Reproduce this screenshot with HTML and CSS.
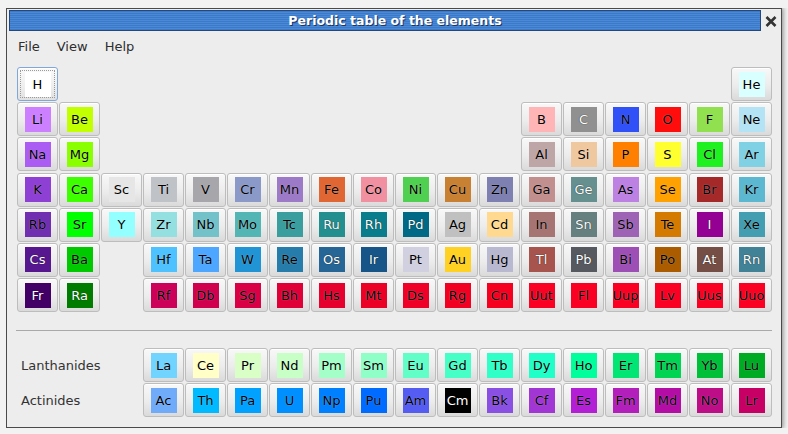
FILE: index.html
```html
<!DOCTYPE html>
<html>
<head>
<meta charset="utf-8">
<title>Periodic table of the elements</title>
<link rel="stylesheet" href="styles.css">
</head>
<body>
<div class="window">
  <div class="titlerow">
    <div class="titlebar">Periodic table of the elements</div>
    <div class="close">
      <svg width="12" height="11" viewBox="0 0 12 11"><path d="M1.5 1 L10.5 10 M10.5 1 L1.5 10" stroke="#333" stroke-width="2.6" fill="none"/></svg>
    </div>
  </div>
  <div class="menubar"><span>File</span><span>View</span><span>Help</span></div>
  <div class="table">
    <div class="el focus"><span class="sw e-H">H</span></div>
    <div class="span16"></div>
    <div class="el"><span class="sw e-He">He</span></div>

    <div class="el"><span class="sw e-Li">Li</span></div>
    <div class="el"><span class="sw e-Be">Be</span></div>
    <div class="span10"></div>
    <div class="el"><span class="sw e-B">B</span></div>
    <div class="el"><span class="sw e-C w">C</span></div>
    <div class="el"><span class="sw e-N">N</span></div>
    <div class="el"><span class="sw e-O">O</span></div>
    <div class="el"><span class="sw e-F">F</span></div>
    <div class="el"><span class="sw e-Ne">Ne</span></div>

    <div class="el"><span class="sw e-Na">Na</span></div>
    <div class="el"><span class="sw e-Mg">Mg</span></div>
    <div class="span10"></div>
    <div class="el"><span class="sw e-Al">Al</span></div>
    <div class="el"><span class="sw e-Si">Si</span></div>
    <div class="el"><span class="sw e-P">P</span></div>
    <div class="el"><span class="sw e-S">S</span></div>
    <div class="el"><span class="sw e-Cl">Cl</span></div>
    <div class="el"><span class="sw e-Ar">Ar</span></div>

    <div class="el"><span class="sw e-K">K</span></div>
    <div class="el"><span class="sw e-Ca">Ca</span></div>
    <div class="el"><span class="sw e-Sc">Sc</span></div>
    <div class="el"><span class="sw e-Ti">Ti</span></div>
    <div class="el"><span class="sw e-V">V</span></div>
    <div class="el"><span class="sw e-Cr">Cr</span></div>
    <div class="el"><span class="sw e-Mn">Mn</span></div>
    <div class="el"><span class="sw e-Fe">Fe</span></div>
    <div class="el"><span class="sw e-Co">Co</span></div>
    <div class="el"><span class="sw e-Ni">Ni</span></div>
    <div class="el"><span class="sw e-Cu">Cu</span></div>
    <div class="el"><span class="sw e-Zn">Zn</span></div>
    <div class="el"><span class="sw e-Ga">Ga</span></div>
    <div class="el"><span class="sw e-Ge w">Ge</span></div>
    <div class="el"><span class="sw e-As">As</span></div>
    <div class="el"><span class="sw e-Se">Se</span></div>
    <div class="el"><span class="sw e-Br">Br</span></div>
    <div class="el"><span class="sw e-Kr">Kr</span></div>

    <div class="el"><span class="sw e-Rb">Rb</span></div>
    <div class="el"><span class="sw e-Sr">Sr</span></div>
    <div class="el"><span class="sw e-Y">Y</span></div>
    <div class="el"><span class="sw e-Zr">Zr</span></div>
    <div class="el"><span class="sw e-Nb">Nb</span></div>
    <div class="el"><span class="sw e-Mo">Mo</span></div>
    <div class="el"><span class="sw e-Tc">Tc</span></div>
    <div class="el"><span class="sw e-Ru w">Ru</span></div>
    <div class="el"><span class="sw e-Rh w">Rh</span></div>
    <div class="el"><span class="sw e-Pd w">Pd</span></div>
    <div class="el"><span class="sw e-Ag">Ag</span></div>
    <div class="el"><span class="sw e-Cd">Cd</span></div>
    <div class="el"><span class="sw e-In">In</span></div>
    <div class="el"><span class="sw e-Sn w">Sn</span></div>
    <div class="el"><span class="sw e-Sb">Sb</span></div>
    <div class="el"><span class="sw e-Te">Te</span></div>
    <div class="el"><span class="sw e-I w">I</span></div>
    <div class="el"><span class="sw e-Xe">Xe</span></div>

    <div class="el"><span class="sw e-Cs w">Cs</span></div>
    <div class="el"><span class="sw e-Ba">Ba</span></div>
    <div class="span1"></div>
    <div class="el"><span class="sw e-Hf">Hf</span></div>
    <div class="el"><span class="sw e-Ta">Ta</span></div>
    <div class="el"><span class="sw e-W">W</span></div>
    <div class="el"><span class="sw e-Re">Re</span></div>
    <div class="el"><span class="sw e-Os w">Os</span></div>
    <div class="el"><span class="sw e-Ir w">Ir</span></div>
    <div class="el"><span class="sw e-Pt">Pt</span></div>
    <div class="el"><span class="sw e-Au">Au</span></div>
    <div class="el"><span class="sw e-Hg">Hg</span></div>
    <div class="el"><span class="sw e-Tl w">Tl</span></div>
    <div class="el"><span class="sw e-Pb w">Pb</span></div>
    <div class="el"><span class="sw e-Bi">Bi</span></div>
    <div class="el"><span class="sw e-Po">Po</span></div>
    <div class="el"><span class="sw e-At w">At</span></div>
    <div class="el"><span class="sw e-Rn w">Rn</span></div>

    <div class="el"><span class="sw e-Fr w">Fr</span></div>
    <div class="el"><span class="sw e-Ra w">Ra</span></div>
    <div class="span1"></div>
    <div class="el"><span class="sw e-Rf">Rf</span></div>
    <div class="el"><span class="sw e-Db">Db</span></div>
    <div class="el"><span class="sw e-Sg">Sg</span></div>
    <div class="el"><span class="sw e-Bh">Bh</span></div>
    <div class="el"><span class="sw e-Hs">Hs</span></div>
    <div class="el"><span class="sw e-Mt">Mt</span></div>
    <div class="el"><span class="sw e-Ds">Ds</span></div>
    <div class="el"><span class="sw e-Rg">Rg</span></div>
    <div class="el"><span class="sw e-Cn">Cn</span></div>
    <div class="el"><span class="sw e-Uut">Uut</span></div>
    <div class="el"><span class="sw e-Fl">Fl</span></div>
    <div class="el"><span class="sw e-Uup">Uup</span></div>
    <div class="el"><span class="sw e-Lv">Lv</span></div>
    <div class="el"><span class="sw e-Uus">Uus</span></div>
    <div class="el"><span class="sw e-Uuo">Uuo</span></div>
  </div>
  <div class="sep"></div>
  <div class="series">
    <div class="label">Lanthanides</div>
    <div class="el"><span class="sw e-La">La</span></div>
    <div class="el"><span class="sw e-Ce">Ce</span></div>
    <div class="el"><span class="sw e-Pr">Pr</span></div>
    <div class="el"><span class="sw e-Nd">Nd</span></div>
    <div class="el"><span class="sw e-Pm">Pm</span></div>
    <div class="el"><span class="sw e-Sm">Sm</span></div>
    <div class="el"><span class="sw e-Eu">Eu</span></div>
    <div class="el"><span class="sw e-Gd">Gd</span></div>
    <div class="el"><span class="sw e-Tb">Tb</span></div>
    <div class="el"><span class="sw e-Dy">Dy</span></div>
    <div class="el"><span class="sw e-Ho">Ho</span></div>
    <div class="el"><span class="sw e-Er">Er</span></div>
    <div class="el"><span class="sw e-Tm">Tm</span></div>
    <div class="el"><span class="sw e-Yb">Yb</span></div>
    <div class="el"><span class="sw e-Lu">Lu</span></div>

    <div class="label">Actinides</div>
    <div class="el"><span class="sw e-Ac">Ac</span></div>
    <div class="el"><span class="sw e-Th">Th</span></div>
    <div class="el"><span class="sw e-Pa">Pa</span></div>
    <div class="el"><span class="sw e-U">U</span></div>
    <div class="el"><span class="sw e-Np">Np</span></div>
    <div class="el"><span class="sw e-Pu">Pu</span></div>
    <div class="el"><span class="sw e-Am">Am</span></div>
    <div class="el"><span class="sw e-Cm w">Cm</span></div>
    <div class="el"><span class="sw e-Bk">Bk</span></div>
    <div class="el"><span class="sw e-Cf">Cf</span></div>
    <div class="el"><span class="sw e-Es">Es</span></div>
    <div class="el"><span class="sw e-Fm">Fm</span></div>
    <div class="el"><span class="sw e-Md">Md</span></div>
    <div class="el"><span class="sw e-No">No</span></div>
    <div class="el"><span class="sw e-Lr">Lr</span></div>
  </div>
</div>
</body>
</html>
```

FILE: styles.css
```css
* { box-sizing: border-box; }

body {
  margin: 8px 0 0 6px;
  background: #f2f2f2;
  font-family: "DejaVu Sans", "Liberation Sans", sans-serif;
  font-size: 12.5px;
}

.window {
  width: 776px;
  height: 420px;
  border: 1px solid #4a4a4a;
  background: #ededed;
  box-shadow: 0 0 5px 1px rgba(0, 0, 0, 0.45);
}

.titlerow {
  display: flex;
  padding: 1px 0 0 2px;
}

.titlebar {
  flex: none;
  width: 752px;
  height: 21px;
  border: 1px solid #24487c;
  background: repeating-linear-gradient(to bottom, #3b7acb 0, #3b7acb 1px, #4b89d5 1px, #4b89d5 2px);
  color: #fff;
  font-weight: bold;
  font-size: 12.5px;
  line-height: 19px;
  text-align: center;
  padding-left: 20px;
  text-shadow: 1px 1px 0 #1a355e;
}

.close {
  flex: 1;
  display: flex;
  align-items: center;
  justify-content: center;
  padding-top: 1px;
}

.menubar {
  display: flex;
  gap: 17px;
  margin-top: 4px;
  height: 24px;
  line-height: 24px;
  padding-left: 11px;
  color: #2e2e2e;
  font-size: 13px;
}

.table,
.series {
  display: grid;
  grid-template-columns: repeat(18, 41px);
  grid-auto-rows: 34px;
  column-gap: 1px;
  margin-left: 10px;
}

.table {
  margin-top: 8px;
  row-gap: 1.2px;
}

.series {
  margin-top: 17px;
  row-gap: 1px;
}

.span16 { grid-column: span 16; }
.span10 { grid-column: span 10; }
.span1 { grid-column: span 1; }

.sep {
  height: 1px;
  background: #a9a9a9;
  margin: 18px 9px 0 9px;
}

.label {
  grid-column: span 3;
  display: flex;
  align-items: center;
  padding-left: 4px;
  color: #333;
  font-size: 13px;
}

.el {
  display: flex;
  align-items: center;
  justify-content: center;
  border: 1px solid #bdbdbd;
  border-radius: 3px;
  background: linear-gradient(to bottom, #f8f8f8 0%, #ececec 55%, #dadada 100%);
  box-shadow: inset 0 1px 0 #ffffff;
}

.el.focus {
  border-color: #80a7da;
  background: linear-gradient(to bottom, #fafafa 0%, #efefef 55%, #e0e0e0 100%);
  outline: 1px dotted #9a9a9a;
  outline-offset: -4px;
}

.sw {
  width: 26px;
  height: 25px;
  display: flex;
  align-items: center;
  justify-content: center;
  color: #000;
  font-size: 13px;
  text-shadow: 0 0 1px rgba(255, 255, 255, 0.55);
}

.sw.w {
  color: #fff;
  text-shadow: 0 0 1px rgba(0, 0, 0, 0.9);
}

.e-H { background: #ffffff; }
.e-He { background: #d9ffff; }
.e-Li { background: #cc80ff; }
.e-Be { background: #c2ff00; }
.e-B { background: #ffb5b5; }
.e-C { background: #909090; }
.e-N { background: #3050f8; }
.e-O { background: #ff0d0d; }
.e-F { background: #90e050; }
.e-Ne { background: #b3e3f5; }
.e-Na { background: #ab5cf2; }
.e-Mg { background: #8aff00; }
.e-Al { background: #bfa6a6; }
.e-Si { background: #f0c8a0; }
.e-P { background: #ff8000; }
.e-S { background: #ffff30; }
.e-Cl { background: #1ff01f; }
.e-Ar { background: #80d1e3; }
.e-K { background: #8f40d4; }
.e-Ca { background: #3dff00; }
.e-Sc { background: #e6e6e6; }
.e-Ti { background: #bfc2c7; }
.e-V { background: #a6a6ab; }
.e-Cr { background: #8a99c7; }
.e-Mn { background: #9c7ac7; }
.e-Fe { background: #e06633; }
.e-Co { background: #f090a0; }
.e-Ni { background: #50d050; }
.e-Cu { background: #c88033; }
.e-Zn { background: #7d80b0; }
.e-Ga { background: #c28f8f; }
.e-Ge { background: #668f8f; }
.e-As { background: #bd80e3; }
.e-Se { background: #ffa100; }
.e-Br { background: #a62929; }
.e-Kr { background: #5cb8d1; }
.e-Rb { background: #702eb0; }
.e-Sr { background: #00ff00; }
.e-Y { background: #94ffff; }
.e-Zr { background: #94e0e0; }
.e-Nb { background: #73c2c9; }
.e-Mo { background: #54b5b5; }
.e-Tc { background: #3b9e9e; }
.e-Ru { background: #248f8f; }
.e-Rh { background: #0a7d8c; }
.e-Pd { background: #006985; }
.e-Ag { background: #c0c0c0; }
.e-Cd { background: #ffd98f; }
.e-In { background: #a67573; }
.e-Sn { background: #668080; }
.e-Sb { background: #9e63b5; }
.e-Te { background: #d47a00; }
.e-I { background: #940094; }
.e-Xe { background: #429eb0; }
.e-Cs { background: #57178f; }
.e-Ba { background: #00c900; }
.e-Hf { background: #4dc2ff; }
.e-Ta { background: #4da6ff; }
.e-W { background: #2194d6; }
.e-Re { background: #267dab; }
.e-Os { background: #266696; }
.e-Ir { background: #175487; }
.e-Pt { background: #d0d0e0; }
.e-Au { background: #ffd123; }
.e-Hg { background: #b8b8d0; }
.e-Tl { background: #a6544d; }
.e-Pb { background: #575961; }
.e-Bi { background: #9e4fb5; }
.e-Po { background: #ab5c00; }
.e-At { background: #754f45; }
.e-Rn { background: #428296; }
.e-Fr { background: #420066; }
.e-Ra { background: #007d00; }
.e-Rf { background: #cc0059; }
.e-Db { background: #d1004f; }
.e-Sg { background: #d90045; }
.e-Bh { background: #e00038; }
.e-Hs { background: #e6002e; }
.e-Mt { background: #eb0026; }
.e-Ds { background: #ef0027; }
.e-Rg { background: #f20022; }
.e-Cn { background: #f5001f; }
.e-Uut { background: #fa0022; }
.e-Fl { background: #fa0022; }
.e-Uup { background: #fa0022; }
.e-Lv { background: #fa0022; }
.e-Uus { background: #fa0022; }
.e-Uuo { background: #fa0022; }
.e-La { background: #70d4ff; }
.e-Ce { background: #ffffc7; }
.e-Pr { background: #d9ffc7; }
.e-Nd { background: #c7ffc7; }
.e-Pm { background: #a3ffc7; }
.e-Sm { background: #8fffc7; }
.e-Eu { background: #61ffc7; }
.e-Gd { background: #45ffc7; }
.e-Tb { background: #30ffc7; }
.e-Dy { background: #1fffc7; }
.e-Ho { background: #00ff9c; }
.e-Er { background: #00e675; }
.e-Tm { background: #00d452; }
.e-Yb { background: #00bf38; }
.e-Lu { background: #00ab24; }
.e-Ac { background: #70abfa; }
.e-Th { background: #00baff; }
.e-Pa { background: #00a1ff; }
.e-U { background: #008fff; }
.e-Np { background: #0080ff; }
.e-Pu { background: #006bff; }
.e-Am { background: #545cf2; }
.e-Cm { background: #000000; }
.e-Bk { background: #8a4fe3; }
.e-Cf { background: #a136d4; }
.e-Es { background: #b31fd4; }
.e-Fm { background: #b31fba; }
.e-Md { background: #b30da6; }
.e-No { background: #bd0d87; }
.e-Lr { background: #c70066; }
```
